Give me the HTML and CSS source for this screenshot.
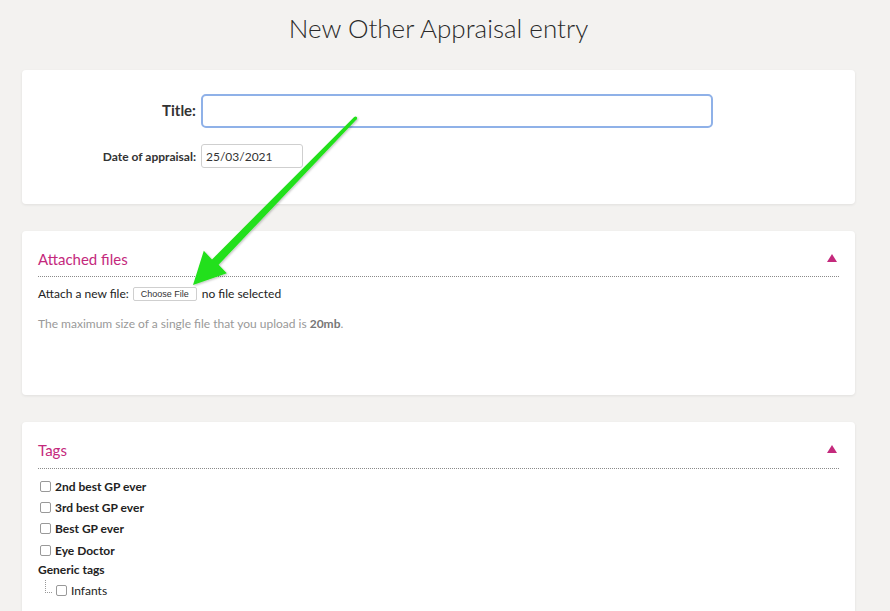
FILE: index.html
```html
<!DOCTYPE html>
<html lang="en">
<head>
<meta charset="utf-8">
<title>New Other Appraisal entry</title>
<link rel="stylesheet" href="styles.css">
</head>
<body>
<h1 class="page-title">New Other Appraisal entry</h1>
<main class="cards">
  <section class="card card-main">
    <div class="form-row">
      <label class="label label-title" for="title">Title:</label>
      <input class="input input-title" id="title" type="text">
    </div>
    <div class="form-row form-row-date">
      <label class="label label-date" for="date">Date of appraisal:</label>
      <input class="input input-date" id="date" type="text" value="25/03/2021">
    </div>
  </section>

  <section class="card card-files">
    <div class="section-head">
      <h2 class="section-title">Attached files</h2>
      <span class="toggle"></span>
    </div>
    <div class="attach-row">
      <span class="attach-label">Attach a new file:</span>
      <span class="file-btn">Choose File</span>
      <span class="file-none">no file selected</span>
    </div>
    <p class="hint">The maximum size of a single file that you upload is <b>20mb</b>.</p>
  </section>

  <section class="card card-tags">
    <div class="section-head">
      <h2 class="section-title">Tags</h2>
      <span class="toggle"></span>
    </div>
    <ul class="tag-list">
      <li class="tag"><span class="box"></span>2nd best GP ever</li>
      <li class="tag"><span class="box"></span>3rd best GP ever</li>
      <li class="tag"><span class="box"></span>Best GP ever</li>
      <li class="tag"><span class="box"></span>Eye Doctor</li>
    </ul>
    <div class="group-title">Generic tags</div>
    <div class="sub-tag"><span class="branch"></span><span class="box"></span>Infants</div>
  </section>
</main>

<svg class="annotation" width="890" height="611" viewBox="0 0 890 611" aria-hidden="true">
  <defs>
    <filter id="sh" x="-20%" y="-20%" width="140%" height="140%">
      <feDropShadow dx="1" dy="1" stdDeviation="1.2" flood-color="#000" flood-opacity="0.25"/>
    </filter>
  </defs>
  <g filter="url(#sh)" fill="#22e01a">
    <polygon points="193,285 203.8,250.8 212.0,259.4 354.2,117.0 356.7,119.3 218.6,264.7 226.8,273.2"/>
    <circle cx="355.5" cy="118.1" r="1.7"/>
  </g>
</svg>
</body>
</html>
```

FILE: styles.css
```css
html, body {
  margin: 0;
  padding: 0;
}
body {
  background: #f3f2f0;
  font-family: Lato, "Open Sans", sans-serif;
  color: #333;
  width: 890px;
  height: 611px;
  overflow: hidden;
  position: relative;
}
.page-title {
  margin: 0 0 0 22px;
  width: 833px;
  padding-top: 12px;
  height: 59px;
  box-sizing: border-box;
  font-size: 26px;
  line-height: 32px;
  font-weight: 300;
  text-align: center;
  color: #2a2a2a;
}
.cards {
  margin-left: 22px;
  width: 833px;
  display: flex;
  flex-direction: column;
  gap: 27px;
  padding-top: 11px;
}
.card {
  background: #fff;
  border-radius: 4px;
  box-shadow: 0 1px 3px rgba(0,0,0,0.08);
  box-sizing: border-box;
}
.card-main {
  height: 134px;
  padding-top: 24px;
}
.form-row {
  display: flex;
  align-items: center;
  gap: 5px;
}
.form-row-date {
  margin-top: 16px;
}
.label {
  width: 174px;
  text-align: right;
  font-weight: 700;
  color: #333;
}
.label-title {
  font-size: 15px;
  margin-top: -2px;
}
.label-date {
  font-size: 12px;
}
.input {
  box-sizing: border-box;
  font-family: Lato, sans-serif;
  background: #fff;
  margin: 0;
  outline: none;
}
.input-title {
  width: 512px;
  height: 34px;
  border: 2px solid #8fb1e8;
  border-radius: 5px;
}
.input-date {
  width: 102px;
  height: 24px;
  border: 1px solid #cfcfcf;
  border-radius: 3px;
  padding: 0 4px;
  font-size: 12px;
  color: #333;
}
.card-files {
  height: 164px;
  padding: 17px 16px 0;
}
.section-head {
  display: flex;
  justify-content: space-between;
  align-items: center;
  border-bottom: 1px dotted #8a8a8a;
  padding-bottom: 6px;
}
.section-title {
  margin: 0;
  font-size: 15px;
  line-height: 22px;
  font-weight: 400;
  color: #c4297c;
}
.toggle {
  width: 0;
  height: 0;
  border-left: 5px solid transparent;
  border-right: 5px solid transparent;
  border-bottom: 8px solid #c4297c;
  margin-right: 2px;
  margin-top: -3px;
}
.attach-row {
  display: flex;
  align-items: center;
  margin-top: 8px;
  height: 16px;
  font-size: 12px;
  color: #222;
}
.file-btn {
  margin-left: 4px;
  box-sizing: border-box;
  height: 14px;
  width: 64px;
  border: 1px solid #cfcfcf;
  border-radius: 2px;
  font-family: "Liberation Sans", Arial, sans-serif;
  font-size: 9px;
  line-height: 13px;
  text-align: center;
  color: #333;
  background: #fff;
  margin-top: 2px;
}
.file-none {
  margin-left: 5px;
}
.hint {
  margin: 16px 0 0;
  font-size: 12px;
  line-height: 14px;
  color: #999;
}
.hint b {
  color: #777;
}
.card-tags {
  height: 200px;
  padding: 17px 16px 0;
}
.card-tags .section-head {
  padding-bottom: 7px;
}
.tag-list {
  list-style: none;
  margin: 7px 0 0;
  padding: 0;
}
.tag {
  display: flex;
  align-items: center;
  height: 21px;
  font-size: 12px;
  font-weight: 700;
  color: #222;
  padding-left: 2px;
}
.tag:nth-child(4) {
  height: 22px;
}
.box {
  width: 9px;
  height: 9px;
  border: 1px solid #999;
  border-radius: 2px;
  margin-right: 4px;
  background: #fff;
}
.group-title {
  height: 18px;
  line-height: 18px;
  font-size: 12px;
  font-weight: 700;
  color: #222;
}
.sub-tag {
  display: flex;
  align-items: center;
  height: 22px;
  font-size: 12px;
  color: #222;
  padding-left: 7px;
}
.branch {
  width: 6px;
  height: 12px;
  border-left: 1px dotted #999;
  border-bottom: 1px dotted #999;
  margin-right: 4px;
  margin-top: -8px;
}
.sub-tag .box {
  margin-right: 4px;
}
.annotation {
  position: absolute;
  left: 0;
  top: 0;
  pointer-events: none;
}
```
